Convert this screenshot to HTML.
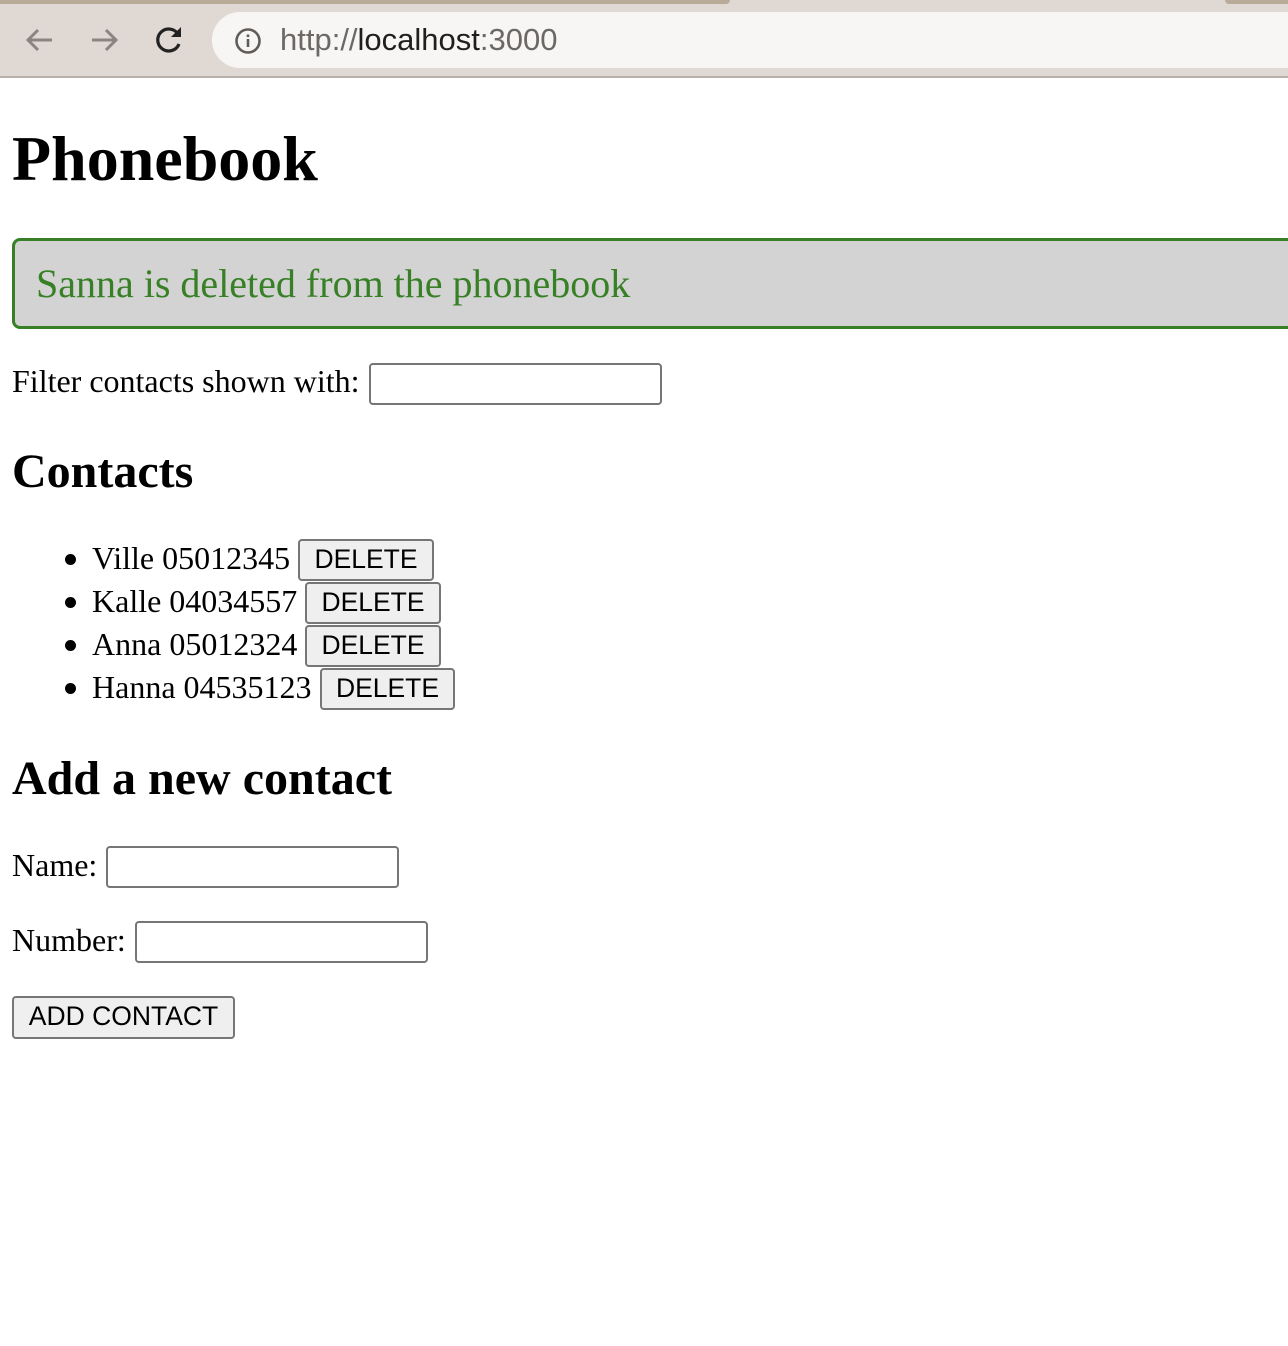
<!DOCTYPE html>
<html><head><meta charset="utf-8"><style>
*{margin:0;padding:0;box-sizing:border-box}
body{width:1288px;height:1346px;background:#fff;position:relative;overflow:hidden;font-family:"Liberation Serif",serif;color:#000}
.a{position:absolute;white-space:nowrap}
.t{font-size:32px;line-height:32px}
.b{position:absolute;width:11px;height:11px;border-radius:50%;background:#000;left:65px}
.btn{position:absolute;background:#efefef;border:2px solid #767676;border-radius:4px;font-family:"Liberation Sans",sans-serif;font-size:26.5px;line-height:37px;text-align:center;color:#000}
.inp{position:absolute;background:#fff;border:2px solid #767676;border-radius:4px;height:42px;width:293px}
</style></head><body>
<div class="a" style="left:0;top:0;width:1288px;height:76px;background:#e0d9d3"></div>
<div class="a" style="left:0;top:0;width:730px;height:4px;background:#b8ab98;border-bottom-right-radius:6px"></div>
<div class="a" style="left:1225px;top:0;width:63px;height:4px;background:#b8ab98;border-bottom-left-radius:6px"></div>
<div class="a" style="left:0;top:76px;width:1288px;height:2px;background:#b5b0aa"></div>
<div class="a" style="left:212px;top:12px;width:1100px;height:56px;background:#f8f6f4;border-radius:28px"></div>
<svg class="a" style="left:20px;top:22px" width="170" height="36" viewBox="0 0 170 36">
<path d="M32 18H8M18 8L8 18l10 10" stroke="#8a8582" stroke-width="3" fill="none"/>
<path d="M72 18h24M86 8l10 10-10 10" stroke="#8a8582" stroke-width="3" fill="none"/>
<path d="M158 12A11 11 0 1 0 159 22" stroke="#222" stroke-width="3.2" fill="none"/>
<path d="M161 5v10h-10z" fill="#222"/>
</svg>
<svg class="a" style="left:234px;top:27px" width="28" height="28" viewBox="0 0 28 28">
<circle cx="14" cy="14" r="11.5" stroke="#5f5c5a" stroke-width="2.6" fill="none"/>
<rect x="12.7" y="12" width="2.6" height="8" fill="#5f5c5a"/><rect x="12.7" y="7.5" width="2.6" height="2.6" fill="#5f5c5a"/>
</svg>
<div class="a" style="left:280px;top:24px;font-family:'Liberation Sans',sans-serif;font-size:31px;line-height:32px;color:#6b6866">http://<span style="color:#1f1f1f">localhost</span>:3000</div>

<div class="a" style="left:12px;top:127px;font-size:64px;line-height:64px;font-weight:bold">Phonebook</div>
<div class="a" style="left:12px;top:238px;width:1300px;height:91px;background:#d3d3d3;border:3px solid #388026;border-radius:8px"></div>
<div class="a" style="left:36px;top:264px;font-size:40px;line-height:40px;color:#388026">Sanna is deleted from the phonebook</div>
<div class="a t" style="left:12px;top:365px">Filter contacts shown with:</div>
<div class="inp" style="left:369px;top:363px"></div>
<div class="a" style="left:12px;top:448px;font-size:48px;line-height:48px;font-weight:bold">Contacts</div>

<div class="b" style="top:554px"></div><div class="a t" style="left:92px;top:542px">Ville 05012345</div><div class="btn" style="left:298px;top:539px;width:136px;height:42px">DELETE</div>
<div class="b" style="top:597px"></div><div class="a t" style="left:92px;top:585px">Kalle 04034557</div><div class="btn" style="left:305px;top:582px;width:136px;height:42px">DELETE</div>
<div class="b" style="top:640px"></div><div class="a t" style="left:92px;top:628px">Anna 05012324</div><div class="btn" style="left:305px;top:625px;width:136px;height:42px">DELETE</div>
<div class="b" style="top:683px"></div><div class="a t" style="left:92px;top:671px">Hanna 04535123</div><div class="btn" style="left:320px;top:668px;width:135px;height:42px">DELETE</div>

<div class="a" style="left:12px;top:755px;font-size:48px;line-height:48px;font-weight:bold">Add a new contact</div>
<div class="a t" style="left:12px;top:849px">Name:</div>
<div class="inp" style="left:106px;top:846px"></div>
<div class="a t" style="left:12px;top:924px">Number:</div>
<div class="inp" style="left:135px;top:921px"></div>
<div class="btn" style="left:12px;top:996px;width:223px;height:43px">ADD CONTACT</div>
</body></html>
